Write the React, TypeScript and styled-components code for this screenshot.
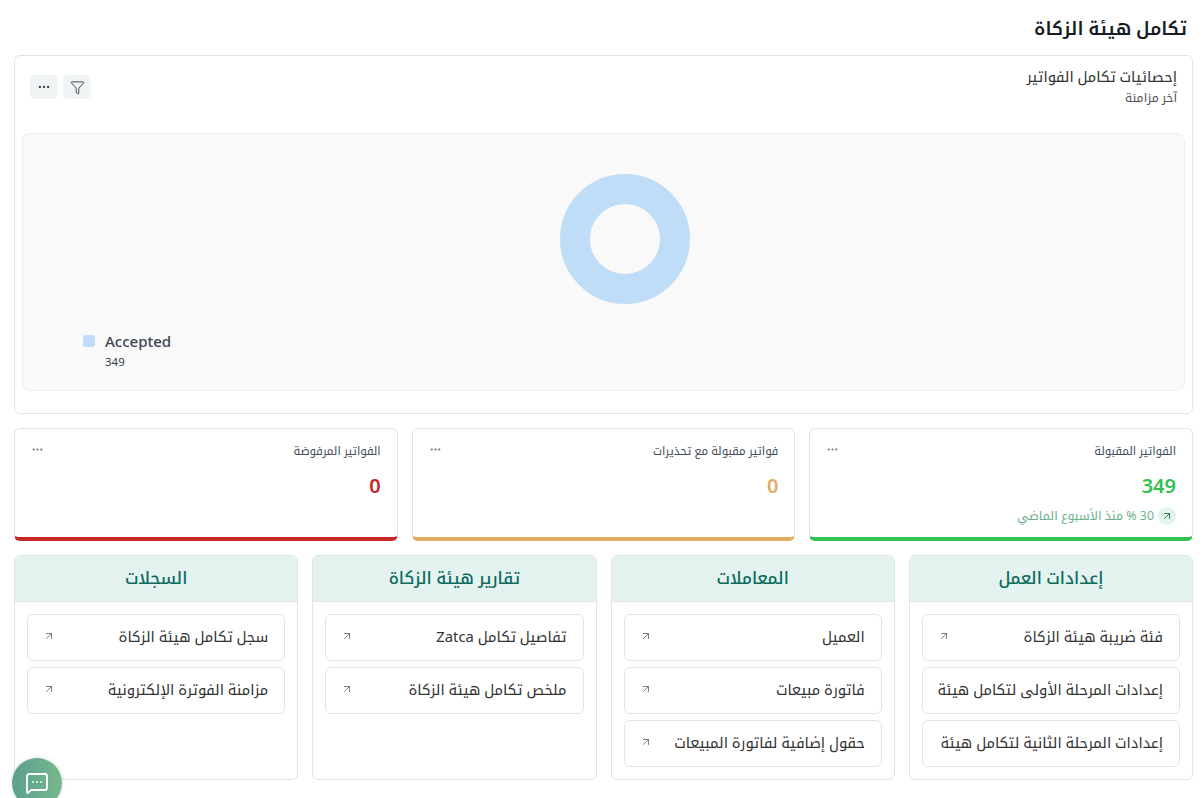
import React from "react";
import styled, { createGlobalStyle } from "styled-components";
import { ArrowUpRight, Filter, MessageSquareMore, MoreHorizontal } from "lucide-react";

const GlobalStyle = createGlobalStyle`
  html, body {
    margin: 0;
    padding: 0;
    background: #fff;
    height: 100%;
    overflow: hidden;
  }
  * {
    box-sizing: border-box;
  }
  body {
    font-family: "Noto Sans", "Noto Kufi Arabic", "DejaVu Sans", sans-serif;
    color: #212b36;
  }
`;

const Page = styled.div`
  direction: rtl;
  width: 1204px;
  height: 798px;
  padding: 14px 11px 0 14px;
  position: relative;
  overflow: hidden;
`;

const Title = styled.h1`
  margin: 0 0 11px;
  padding-right: 6px;
  height: 30px;
  line-height: 28px;
  font-size: 18.4px;
  font-weight: 600;
  color: #161c24;
`;

const ChartCard = styled.section`
  height: 359px;
  border: 1px solid #e0e3e7;
  border-radius: 6px;
  padding: 0 7px;
  margin-bottom: 14px;
`;

const ChartHeader = styled.div`
  display: flex;
  justify-content: space-between;
  align-items: flex-start;
  height: 77px;
  padding: 8px 8px 0 8px;
`;

const ChartTitle = styled.div`
  font-size: 14.8px;
  line-height: 24px;
  color: #333;
`;

const ChartSubtitle = styled.div`
  font-size: 12.3px;
  line-height: 20px;
  color: #555;
`;

const HeaderActions = styled.div`
  display: flex;
  direction: ltr;
  gap: 5px;
  margin-top: 11px;
`;

const IconButton = styled.button`
  width: 28px;
  height: 24px;
  padding: 0;
  border: 0;
  border-radius: 5px;
  background: #f1f4f5;
  color: #333d48;
  display: flex;
  align-items: center;
  justify-content: center;
`;

const ChartPanel = styled.div`
  height: 258px;
  background: #f9f9f9;
  border: 1px solid #eeeeee;
  border-radius: 8px;
  position: relative;
  display: flex;
  justify-content: center;
  padding: 40px 0 0 42px;
`;

const Donut = styled.div`
  width: 130px;
  height: 130px;
  border-radius: 50%;
  border: 30px solid #c0ddf8;
`;

const Legend = styled.div`
  position: absolute;
  left: 60px;
  top: 196px;
  direction: ltr;
  display: grid;
  grid-template-columns: 12px auto;
  column-gap: 10px;
  align-items: center;
`;

const LegendSwatch = styled.span`
  width: 12px;
  height: 12px;
  border-radius: 3px;
  background: #c0ddf8;
`;

const LegendLabel = styled.span`
  font-size: 15px;
  line-height: 22px;
  font-weight: 500;
  color: #3a4654;
`;

const LegendValue = styled.span`
  grid-column: 2;
  font-size: 11.5px;
  line-height: 20px;
  color: #333d48;
`;

const StatRow = styled.div`
  display: grid;
  grid-template-columns: repeat(3, 1fr);
  gap: 14px;
  margin-bottom: 14px;
`;

const StatCard = styled.div<{ $accent: string }>`
  height: 113px;
  border: 1px solid #e0e3e7;
  border-bottom: 4px solid ${(p) => p.$accent};
  border-radius: 6px;
  padding: 11px 16px 0;
`;

const StatTop = styled.div`
  display: flex;
  justify-content: space-between;
  align-items: flex-start;
  height: 32px;
`;

const StatLabel = styled.div`
  font-size: 11.6px;
  line-height: 22px;
  color: #454f5b;
`;

const StatDots = styled.span`
  color: #637381;
  display: flex;
  height: 18px;
  align-items: center;
`;

const StatValue = styled.div<{ $color: string }>`
  font-size: 20px;
  line-height: 28px;
  font-weight: 600;
  color: ${(p) => p.$color};
`;

const Trend = styled.div`
  display: flex;
  align-items: center;
  gap: 4px;
  margin-top: 7px;
  font-size: 12.4px;
  line-height: 18px;
  color: #6fb08f;
`;

const TrendBadge = styled.span`
  width: 18px;
  height: 18px;
  border-radius: 50%;
  background: #e3f3ea;
  color: #2f7d5b;
  display: flex;
  align-items: center;
  justify-content: center;
`;

const LinkGrid = styled.div`
  display: grid;
  grid-template-columns: repeat(4, 1fr);
  gap: 14px;
`;

const LinkCard = styled.section`
  height: 225px;
  border: 1px solid #e0e3e7;
  border-radius: 6px;
  overflow: hidden;
`;

const LinkCardHeader = styled.h2`
  margin: 0;
  height: 46px;
  line-height: 44px;
  text-align: center;
  font-size: 16.8px;
  font-weight: 500;
  color: #0b6b5d;
  background: #e4f2f0;
  border-bottom: 1px solid #e0e3e7;
`;

const LinkList = styled.div`
  display: flex;
  flex-direction: column;
  gap: 6px;
  padding: 12px 12px;
`;

const LinkRow = styled.a`
  height: 47px;
  border: 1px solid #e0e3e7;
  border-radius: 6px;
  padding: 0 16px 3px 13px;
  display: flex;
  align-items: center;
  justify-content: space-between;
  gap: 8px;
  font-size: 14.8px;
  color: #333;
  overflow: hidden;
`;

const LinkText = styled.span`
  height: 26px;
  line-height: 26px;
  overflow: hidden;
`;

const LinkArrow = styled.span`
  display: flex;
  flex-shrink: 0;
  margin-left: 2px;
  color: #555;
`;

const ChatBubble = styled.button`
  position: absolute;
  left: 12px;
  top: 758px;
  width: 50px;
  height: 50px;
  padding: 13px 0 0;
  border: 0;
  border-radius: 50%;
  background: linear-gradient(90deg, #5ba08f, #78b78c);
  box-shadow: 0 0 4px rgba(0, 0, 0, 0.15);
  color: #fff;
  display: flex;
  justify-content: center;
`;

const stats = [
  { label: "الفواتير المقبولة", value: "349", color: "#35c04f", accent: "#35c04f", trend: "30 % منذ الأسبوع الماضي" },
  { label: "فواتير مقبولة مع تحذيرات", value: "0", color: "#e2ad62", accent: "#e2ad62" },
  { label: "الفواتير المرفوضة", value: "0", color: "#c62828", accent: "#c62828" },
];

const groups = [
  {
    title: "إعدادات العمل",
    links: [
      { text: "فئة ضريبة هيئة الزكاة" },
      { text: "إعدادات المرحلة الأولى لتكامل هيئة الزكاة", clipped: true },
      { text: "إعدادات المرحلة الثانية لتكامل هيئة الزكاة", clipped: true },
    ],
  },
  {
    title: "المعاملات",
    links: [{ text: "العميل" }, { text: "فاتورة مبيعات" }, { text: "حقول إضافية لفاتورة المبيعات" }],
  },
  {
    title: "تقارير هيئة الزكاة",
    links: [{ text: "تفاصيل تكامل Zatca" }, { text: "ملخص تكامل هيئة الزكاة" }],
  },
  {
    title: "السجلات",
    links: [{ text: "سجل تكامل هيئة الزكاة" }, { text: "مزامنة الفوترة الإلكترونية" }],
  },
];

export default function App() {
  return (
    <>
      <GlobalStyle />
      <Page>
        <Title>تكامل هيئة الزكاة</Title>
        <ChartCard>
          <ChartHeader>
            <div>
              <ChartTitle>إحصائيات تكامل الفواتير</ChartTitle>
              <ChartSubtitle>آخر مزامنة</ChartSubtitle>
            </div>
            <HeaderActions>
              <IconButton>
                <MoreHorizontal size={14} />
              </IconButton>
              <IconButton>
                <Filter size={15} strokeWidth={1.5} />
              </IconButton>
            </HeaderActions>
          </ChartHeader>
          <ChartPanel>
            <Donut />
            <Legend>
              <LegendSwatch />
              <LegendLabel>Accepted</LegendLabel>
              <LegendValue>349</LegendValue>
            </Legend>
          </ChartPanel>
        </ChartCard>

        <StatRow>
          {stats.map((s) => (
            <StatCard key={s.label} $accent={s.accent}>
              <StatTop>
                <StatLabel>{s.label}</StatLabel>
                <StatDots>
                  <MoreHorizontal size={13} />
                </StatDots>
              </StatTop>
              <StatValue $color={s.color}>{s.value}</StatValue>
              {s.trend && (
                <Trend>
                  <TrendBadge>
                    <ArrowUpRight size={12} />
                  </TrendBadge>
                  {s.trend}
                </Trend>
              )}
            </StatCard>
          ))}
        </StatRow>

        <LinkGrid>
          {groups.map((g) => (
            <LinkCard key={g.title}>
              <LinkCardHeader>{g.title}</LinkCardHeader>
              <LinkList>
                {g.links.map((l) => (
                  <LinkRow key={l.text}>
                    <LinkText>{l.text}</LinkText>
                    {!("clipped" in l) && (
                      <LinkArrow>
                        <ArrowUpRight size={12} strokeWidth={1.5} />
                      </LinkArrow>
                    )}
                  </LinkRow>
                ))}
              </LinkList>
            </LinkCard>
          ))}
        </LinkGrid>

        <ChatBubble>
          <MessageSquareMore size={24} strokeWidth={1.8} />
        </ChatBubble>
      </Page>
    </>
  );
}
